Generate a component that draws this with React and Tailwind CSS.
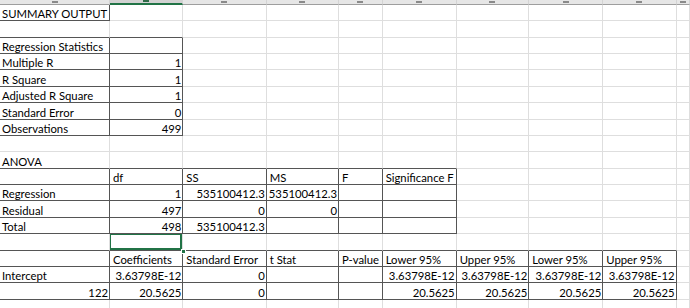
import React from 'react'

const GRID = 'grid grid-cols-[110px_73.3px_83.4px_72.3px_43.7px_74px_72.6px_74px_73.4px_1fr]'

const HEAD = ['A', 'B', 'C', 'D', 'E', 'F', 'G', 'H', 'I', 'J']

const rows = [
  ['SUMMARY OUTPUT'],
  [],
  ['Regression Statistics'],
  ['Multiple R', '1'],
  ['R Square', '1'],
  ['Adjusted R Square', '1'],
  ['Standard Error', '0'],
  ['Observations', '499'],
  [],
  ['ANOVA'],
  ['', 'df', 'SS', 'MS', 'F', 'Significance F'],
  ['Regression', '1', '535100412.3', '535100412.3'],
  ['Residual', '497', '0', '0'],
  ['Total', '498', '535100412.3'],
  [],
  ['', 'Coefficients', 'Standard Error', 't Stat', 'P-value', 'Lower 95%', 'Upper 95%', 'Lower 95%', 'Upper 95%'],
  ['Intercept', '3.63798E-12', '0', '', '', '3.63798E-12', '3.63798E-12', '3.63798E-12', '3.63798E-12'],
  ['122', '20.5625', '0', '', '', '20.5625', '20.5625', '20.5625', '20.5625'],
  [],
]

// bordered output ranges: [rowStart, colStart, rowEnd, colEnd]
const boxes = [
  [0, 0, 0, 0],
  [2, 0, 7, 1],
  [10, 0, 13, 5],
  [15, 0, 17, 8],
]

const boxed = (r, c) => boxes.some(([r1, c1, r2, c2]) => r >= r1 && r <= r2 && c >= c1 && c <= c2)
const isNum = (v) => /^-?[\d.]+(E-?\d+)?$/.test(v)

function Cell({ value, r, c }) {
  const darkR = boxed(r, c) || boxed(r, c + 1)
  const darkB = boxed(r, c) || boxed(r + 1, c)
  const num = value && isNum(value)
  const selected = r === 14 && c === 1
  return (
    <div
      className={`relative flex items-end overflow-hidden whitespace-nowrap border-r border-b ${
        darkR ? 'border-r-[#555]' : 'border-r-[#dedede]'
      } ${darkB ? 'border-b-[#555]' : 'border-b-[#dedede]'} ${
        num ? 'justify-end pr-[1px]' : c === 0 ? 'pl-[2px]' : 'pl-[3px]'
      }`}
    >
      <span className="leading-[13px]">{value}</span>
      {selected && (
        <div className="absolute -left-[1px] -top-[1px] right-0 bottom-0 border-2 border-[#217346]" />
      )}
    </div>
  )
}

export default function App() {
  return (
    <div className="w-[690px] h-[308px] overflow-hidden bg-white text-[11.3px] text-black font-['Lato','Liberation_Sans',sans-serif]">
      {/* column header strip, cut off by the crop */}
      <div className={`${GRID} h-[4.8px] overflow-hidden bg-[#e6e6e6]`}>
        {HEAD.map((h, i) => (
          <div
            key={h}
            className={`flex items-end justify-center border-r border-r-[#d4d4d4] ${
              i === 1 ? 'border-b-2 border-b-[#217346] bg-[#d2d2d2]' : 'border-b border-b-[#9e9e9e]'
            }`}
          >
            <div className={`w-[6px] h-[2px] mb-[1px] ${i === 1 ? 'bg-[#2f6b48]' : 'bg-[#8a8a8a]'}`} />
          </div>
        ))}
      </div>
      <div className={`${GRID} auto-rows-[16.4px] relative`}>
        {rows.map((row, r) =>
          HEAD.map((_, c) => <Cell key={`${r}-${c}`} value={row[c] || ''} r={r} c={c} />)
        )}
        <div className="absolute left-[181px] top-[244.5px] w-[5px] h-[5px] bg-[#217346] border border-white" />
      </div>
    </div>
  )
}
